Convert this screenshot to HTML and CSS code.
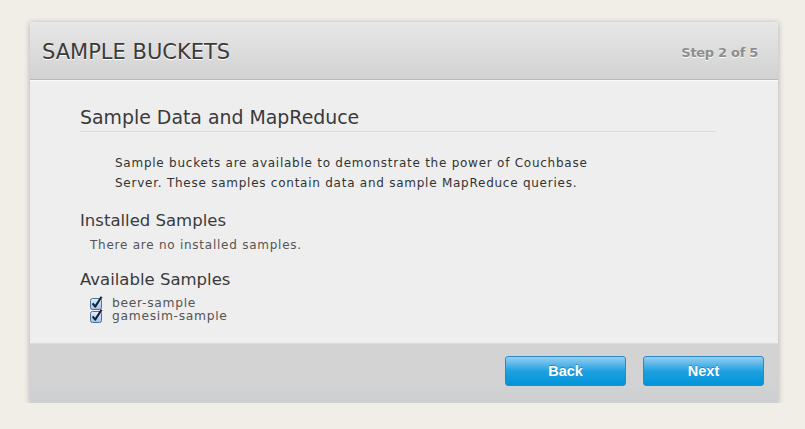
FILE: index.html
```html
<!DOCTYPE html>
<html>
<head>
<meta charset="utf-8">
<link rel="stylesheet" href="styles.css">
</head>
<body>
<div class="page">
  <div class="dialog">
    <div class="header">
      <h1 class="title">SAMPLE BUCKETS</h1>
      <span class="step">Step 2 of 5</span>
    </div>
    <div class="content">
      <h2 class="section-title">Sample Data and MapReduce</h2>
      <p class="intro">Sample buckets are available to demonstrate the power of Couchbase<br>Server. These samples contain data and sample MapReduce queries.</p>
      <h3 class="sub-title installed">Installed Samples</h3>
      <p class="note">There are no installed samples.</p>
      <h3 class="sub-title avail">Available Samples</h3>
      <ul class="samples">
        <li class="sample">
          <svg class="check" width="14" height="14" viewBox="0 0 14 14"><defs><linearGradient id="cb1" x1="0" y1="0" x2="0" y2="1"><stop offset="0" stop-color="#e3eefb"/><stop offset="1" stop-color="#9fc2ea"/></linearGradient></defs><rect x="0.5" y="2.5" width="11" height="11" rx="2" fill="url(#cb1)" stroke="#53709a"/><path d="M2.6 7.4 L5.2 10.6 L11.6 0.8" fill="none" stroke="#15223a" stroke-width="2.1" stroke-linejoin="round"/></svg>
          <span>beer-sample</span>
        </li>
        <li class="sample">
          <svg class="check" width="14" height="14" viewBox="0 0 14 14"><defs><linearGradient id="cb2" x1="0" y1="0" x2="0" y2="1"><stop offset="0" stop-color="#e3eefb"/><stop offset="1" stop-color="#9fc2ea"/></linearGradient></defs><rect x="0.5" y="2.5" width="11" height="11" rx="2" fill="url(#cb2)" stroke="#53709a"/><path d="M2.6 7.4 L5.2 10.6 L11.6 0.8" fill="none" stroke="#15223a" stroke-width="2.1" stroke-linejoin="round"/></svg>
          <span>gamesim-sample</span>
        </li>
      </ul>
    </div>
    <div class="footer">
      <button class="btn">Back</button>
      <button class="btn">Next</button>
    </div>
  </div>
</div>
</body>
</html>
```
FILE: styles.css
```css
html, body {
  margin: 0;
  padding: 0;
  background: #f1eee8;
}
.page {
  padding: 22px 0 0 30px;
  font-family: "DejaVu Sans", Verdana, sans-serif;
}
.dialog {
  width: 748px;
  background: #eeeeee;
  box-shadow: 0 1px 6px rgba(0,0,0,0.28);
  display: flex;
  flex-direction: column;
}
.header {
  height: 58px;
  box-sizing: border-box;
  background: linear-gradient(#e7e7e7, #d2d2d2);
  border-bottom: 1px solid #b9b9b9;
  box-shadow: 0 1px 0 #fafafa;
  display: flex;
  align-items: flex-start;
  justify-content: space-between;
  padding: 17px 20px 0 12px;
}
.title {
  margin: 0;
  font-weight: normal;
  font-size: 21px;
  line-height: 26px;
  color: #3b3b3b;
  text-shadow: 0 1px 0 #fff;
}
.step {
  margin-top: 1px;
  font-weight: bold;
  font-size: 13px;
  line-height: 26px;
  color: #8d8d8d;
  text-shadow: 0 1px 0 #fafafa;
  letter-spacing: -0.3px;
}
.content {
  height: 263px;
  box-sizing: border-box;
  padding: 25px 62px 0 50px;
  color: #333;
}
.section-title {
  margin: 0;
  font-weight: normal;
  font-size: 18.9px;
  line-height: 24px;
  color: #3a3a3a;
  padding-bottom: 2px;
  border-bottom: 1px solid #dcdcdc;
}
.intro {
  margin: 20.5px 0 0 35px;
  font-size: 12px;
  line-height: 20px;
  color: #333;
  letter-spacing: 0.75px;
}
.sub-title {
  margin: 0;
  font-weight: normal;
  font-size: 16.5px;
  line-height: 20px;
  color: #3a3a3a;
}
.installed {
  margin-top: 18px;
}
.note {
  margin: 5.5px 0 0 10px;
  font-size: 12px;
  line-height: 18px;
  color: #555;
  letter-spacing: 0.75px;
}
.avail {
  margin-top: 15.75px;
}
.samples {
  list-style: none;
  margin: 6.8px 0 0 10px;
  padding: 0;
}
.sample {
  display: flex;
  align-items: center;
  gap: 8px;
  height: 13px;
  font-size: 12.3px;
  color: #555;
  letter-spacing: 0.7px;
}
.check {
  display: block;
  flex: none;
}
.footer {
  height: 60px;
  box-sizing: border-box;
  background: linear-gradient(#d3d3d3 60%, #cdcfd1);
  border-top: 1px solid #dadada;
  display: flex;
  justify-content: flex-end;
  align-items: flex-start;
  gap: 17px;
  padding: 12px 14px 0 0;
}
.btn {
  width: 121px;
  height: 30px;
  border: 1px solid #2d87c9;
  border-radius: 3px;
  background: linear-gradient(#96cff1, #1fa0e0 50%, #0094d8);
  color: #fff;
  font-family: "Liberation Sans", Arial, sans-serif;
  font-weight: bold;
  font-size: 14.5px;
  text-shadow: 0 -1px 0 rgba(0,70,130,0.35);
  padding: 0;
}
```
